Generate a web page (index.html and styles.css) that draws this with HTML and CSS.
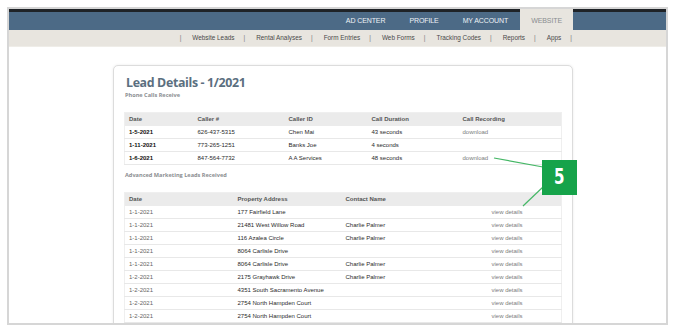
FILE: index.html
```html
<!DOCTYPE html>
<html>
<head>
<meta charset="utf-8">
<link rel="stylesheet" href="styles.css">
</head>
<body>
<div class="frame">
  <header class="topbar">
    <div class="wrap">
      <nav class="tabs">
        <span class="tab">AD CENTER</span>
        <span class="tab">PROFILE</span>
        <span class="tab">MY ACCOUNT</span>
        <span class="tab active">WEBSITE</span>
      </nav>
    </div>
  </header>
  <div class="subbar">
    <div class="wrap">
      <nav class="subnav">
        <span class="sep">|</span><span>Website Leads</span>
        <span class="sep">|</span><span>Rental Analyses</span>
        <span class="sep">|</span><span>Form Entries</span>
        <span class="sep">|</span><span>Web Forms</span>
        <span class="sep">|</span><span>Tracking Codes</span>
        <span class="sep">|</span><span>Reports</span>
        <span class="sep">|</span><span>Apps</span>
        <span class="sep">|</span>
      </nav>
    </div>
  </div>
  <main class="content">
    <div class="wrap">
      <section class="card">
        <h1 class="title">Lead Details - 1/2021</h1>
        <h2 class="subtitle">Phone Calls Receive</h2>
        <table class="grid calls">
          <colgroup><col class="c1"><col class="c2"><col class="c3"><col class="c4"><col class="c5"></colgroup>
          <thead><tr><th>Date</th><th>Caller #</th><th>Caller ID</th><th>Call Duration</th><th>Call Recording</th></tr></thead>
          <tbody>
            <tr><td class="strong">1-5-2021</td><td>626-437-5315</td><td>Chen Mai</td><td>43 seconds</td><td class="link">download</td></tr>
            <tr><td class="strong">1-11-2021</td><td>773-265-1251</td><td>Banks Joe</td><td>4 seconds</td><td></td></tr>
            <tr><td class="strong">1-6-2021</td><td>847-564-7732</td><td>A A Services</td><td>48 seconds</td><td class="link">download</td></tr>
          </tbody>
        </table>
        <h2 class="subtitle second">Advanced Marketing Leads Received</h2>
        <table class="grid leads">
          <colgroup><col class="d1"><col class="d2"><col class="d3"><col class="d4"></colgroup>
          <thead><tr><th>Date</th><th>Property Address</th><th>Contact Name</th><th></th></tr></thead>
          <tbody>
            <tr><td class="date">1-1-2021</td><td>177 Fairfield Lane</td><td></td><td class="link">view details</td></tr>
            <tr><td class="date">1-1-2021</td><td>21481 West Willow Road</td><td>Charlie Palmer</td><td class="link">view details</td></tr>
            <tr><td class="date">1-1-2021</td><td>116 Azalea Circle</td><td>Charlie Palmer</td><td class="link">view details</td></tr>
            <tr><td class="date">1-1-2021</td><td>8064 Carlisle Drive</td><td></td><td class="link">view details</td></tr>
            <tr><td class="date">1-1-2021</td><td>8064 Carlisle Drive</td><td>Charlie Palmer</td><td class="link">view details</td></tr>
            <tr><td class="date">1-2-2021</td><td>2175 Grayhawk Drive</td><td>Charlie Palmer</td><td class="link">view details</td></tr>
            <tr><td class="date">1-2-2021</td><td>4351 South Sacramento Avenue</td><td></td><td class="link">view details</td></tr>
            <tr><td class="date">1-2-2021</td><td>2754 North Hampden Court</td><td></td><td class="link">view details</td></tr>
            <tr><td class="date">1-2-2021</td><td>2754 North Hampden Court</td><td></td><td class="link">view details</td></tr>
          </tbody>
        </table>
      </section>
    </div>
  </main>
</div>
<svg class="leader" width="678" height="334" viewBox="0 0 678 334">
  <line x1="494" y1="158" x2="543" y2="167"/>
  <line x1="543" y1="187" x2="523" y2="206"/>
</svg>
<div class="badge"><span class="num">5</span></div>
</body>
</html>
```
FILE: styles.css
```css
* { box-sizing: border-box; }
html, body { margin: 0; padding: 0; background: #fff; }
body {
  position: relative;
  width: 678px;
  height: 334px;
  overflow: hidden;
  font-family: "Liberation Sans", Arial, sans-serif;
}
.frame {
  margin: 7px 0 0 7px;
  width: 661px;
  height: 318px;
  border: 2px solid #d6d6d6;
  overflow: hidden;
  background: #fff;
}
.wrap {
  margin-left: 104px;
  width: 460px;
}
.topbar {
  height: 21px;
  border-top: 3px solid #1f2327;
  background: #4c6a86;
}
.tabs {
  display: flex;
  justify-content: flex-end;
  height: 18px;
}
.tab {
  padding: 0 12px;
  color: #eef2f6;
  font-size: 7px;
  line-height: 17px;
  letter-spacing: -0.1px;
}
.tab.active {
  margin-top: -3px;
  height: 21px;
  line-height: 23px;
  padding: 0 11px 0 11px;
  background: #e8e5df;
  color: #8a8d90;
}
.subbar {
  height: 17px;
  background: #e8e5df;
  border-bottom: 1px solid #efede8;
}
.subnav {
  display: flex;
  justify-content: flex-end;
  padding-right: 1px;
  font-size: 6.4px;
  line-height: 16px;
  color: #4a4a4a;
}
.subnav .sep { margin: 0 11px 0 9px; color: #777; }
.subnav .sep:first-child { margin-left: 0; }
.subnav .sep:last-child { margin-right: 0; }
.content { padding-top: 18px; }
.card {
  width: 460px;
  height: 300px;
  border: 1px solid #dcdcdc;
  border-radius: 5px;
  box-shadow: 0 0 3px rgba(0,0,0,0.08);
  padding: 9px 11px 0 10px;
  background: #fff;
}
.title {
  margin: 0 0 0 2px;
  font-family: "Open Sans", "DejaVu Sans", sans-serif;
  font-weight: 700;
  font-size: 12.4px;
  line-height: 16px;
  color: #5b6f80;
  letter-spacing: -0.35px;
}
.subtitle {
  margin: 0 0 0 1px;
  font-family: "Open Sans", "DejaVu Sans", sans-serif;
  font-weight: 700;
  font-size: 5.6px;
  line-height: 8px;
  color: #8b8e91;
}
.subtitle.second { margin-top: 6px; }
.grid {
  width: 437px;
  border-collapse: collapse;
  table-layout: fixed;
  font-size: 6px;
  border: 1px solid #efefef;
}
.calls { margin-top: 13px; }
.leads { margin-top: 13px; }
.grid th {
  height: 13px;
  padding: 0 0 0 4px;
  background: #ebebeb;
  text-align: left;
  font-weight: 700;
  color: #555;
}
.grid td {
  height: 13px;
  padding: 0 0 0 4px;
  border-bottom: 1px solid #e8e8e8;
  color: #2a2a2a;
  white-space: nowrap;
}
.grid td.strong { font-weight: 700; color: #111; }
.grid td.date { color: #666; }
.grid td.link { color: #7d7d7d; }
.c1 { width: 69px; } .c2 { width: 91px; } .c3 { width: 83px; } .c4 { width: 91px; } .c5 { width: 103px; }
.d1 { width: 109px; } .d2 { width: 108px; } .d3 { width: 146px; } .d4 { width: 74px; }
.leader {
  position: absolute;
  left: 0;
  top: 0;
  pointer-events: none;
}
.leader line { stroke: #45b766; stroke-width: 1.2; }
.badge {
  position: absolute;
  left: 542px;
  top: 160px;
  width: 35px;
  height: 35px;
  background: #16a34a;
  display: flex;
  align-items: center;
  justify-content: center;
}
.num {
  display: inline-block;
  color: #fff;
  font-family: "DejaVu Sans", sans-serif;
  font-weight: 700;
  font-size: 21px;
  line-height: 21px;
  transform: scaleX(0.72);
}
```
